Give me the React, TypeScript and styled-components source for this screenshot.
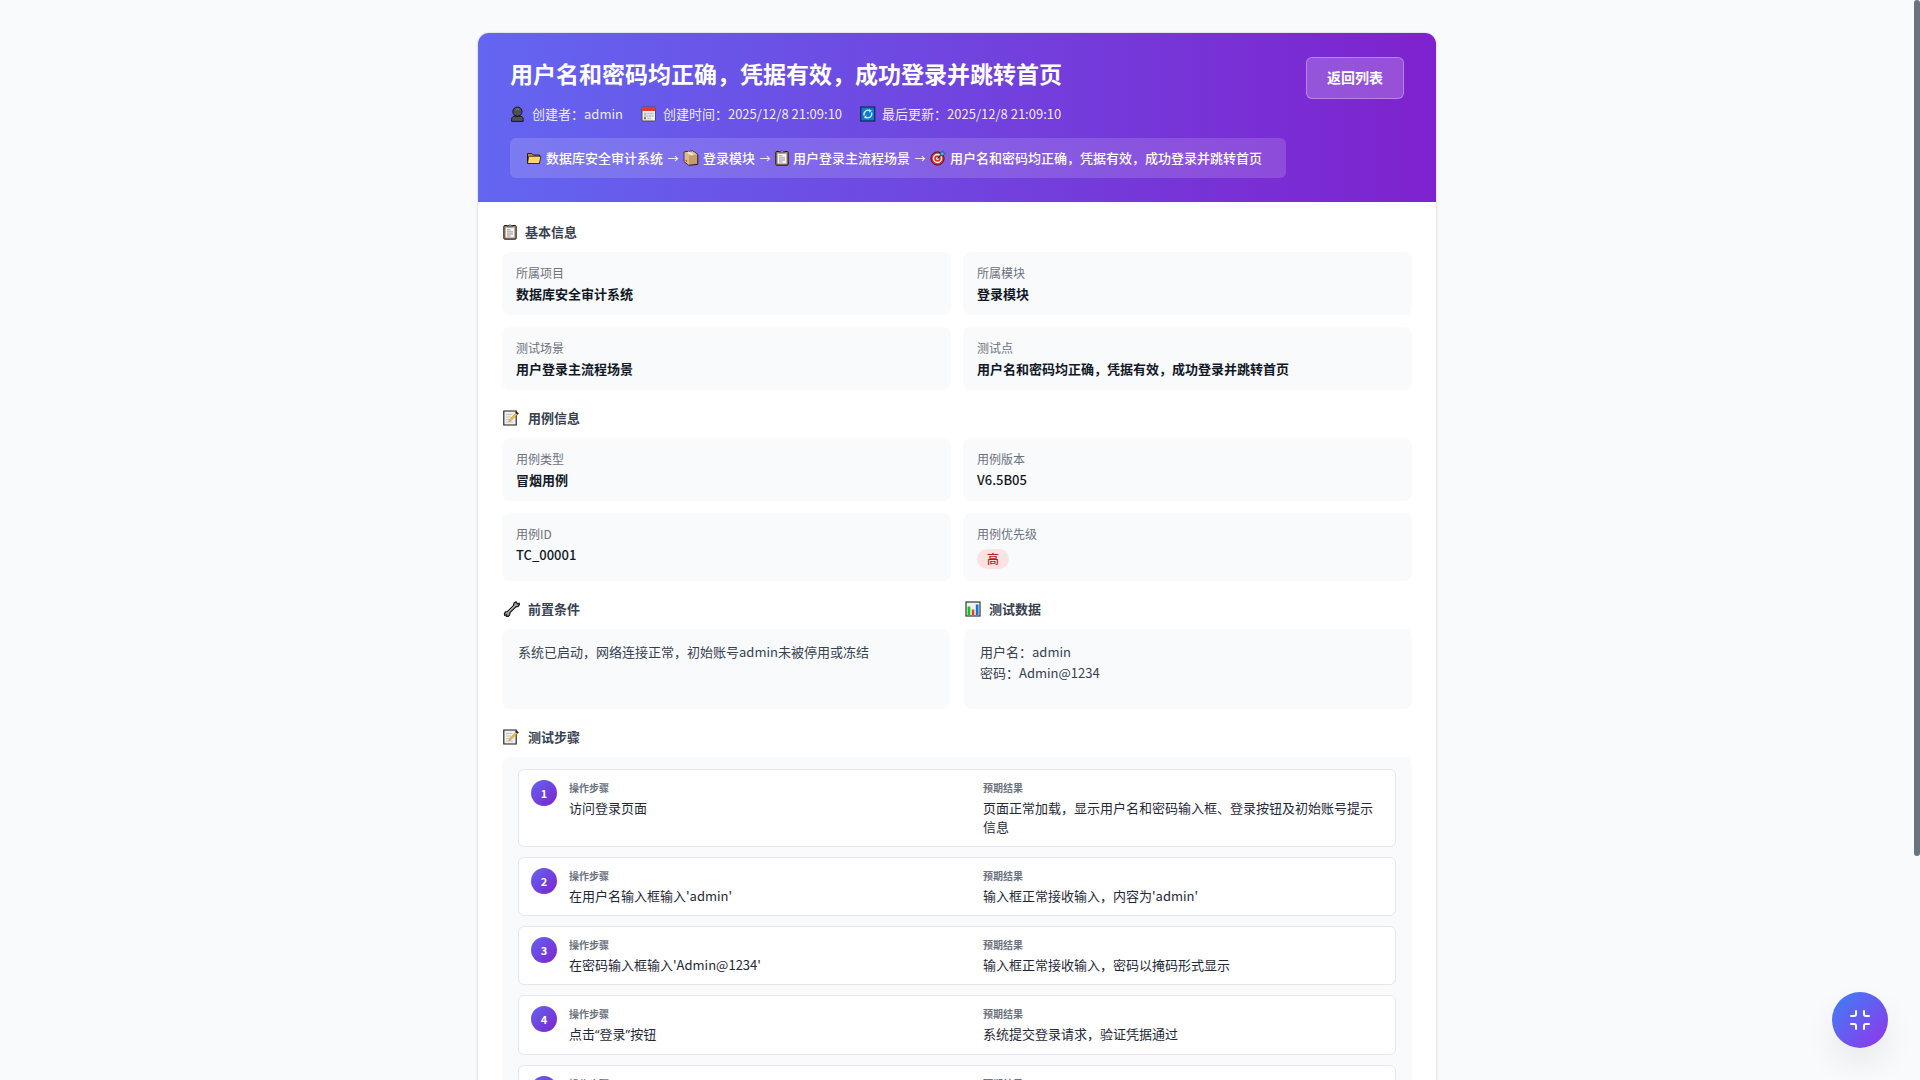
import React from 'react';
import styled, { createGlobalStyle } from 'styled-components';
import { Minimize } from 'lucide-react';

const GlobalStyle = createGlobalStyle`
  *, *::before, *::after { box-sizing: border-box; }
  html, body { margin: 0; padding: 0; }
  body {
    background: #f8fafc;
    color: #111827;
    font-family: "Noto Sans CJK SC", "Noto Sans", sans-serif;
    font-size: 13px;
    line-height: 20px;
  }
  h1, h2, p, dl, dt, dd, ol { margin: 0; padding: 0; }
`;

const Page = styled.div`
  height: 100vh;
  margin-right: 6px;
  overflow-y: auto;
  scrollbar-width: none;
  padding: 32px 24px 140px;
  background: #f8fafc;
`;

const ScrollThumb = styled.div`
  position: fixed;
  top: 0;
  right: 0;
  width: 6px;
  height: 856px;
  border-radius: 3px;
  background: #6b7280;
`;

const Card = styled.main`
  max-width: 960px;
  margin: 0 auto;
  background: #ffffff;
  border: 1px solid #e5e7eb;
  border-radius: 12px;
  overflow: hidden;
  box-shadow: 0 1px 3px rgba(0, 0, 0, 0.06);
`;

const Header = styled.header`
  display: flex;
  align-items: flex-start;
  gap: 20px;
  padding: 24px 32px;
  color: #ffffff;
  background: linear-gradient(90deg, #6366f1 0%, #7e22ce 100%);
`;

const HeaderMain = styled.div`
  flex: 1;
  min-width: 0;
  display: flex;
  flex-direction: column;
  gap: 14px;
`;

const Title = styled.h1`
  font-size: 23px;
  line-height: 32px;
  font-weight: 700;
`;

const MetaRow = styled.div`
  display: flex;
  flex-wrap: wrap;
  gap: 18px;
  line-height: 21px;
  color: rgba(255, 255, 255, 0.9);
`;

const MetaItem = styled.span`
  display: flex;
  align-items: center;
  gap: 6px;
`;

const Breadcrumb = styled.nav`
  display: flex;
  flex-wrap: wrap;
  align-items: center;
  gap: 4px;
  padding: 10px 16px;
  border-radius: 6px;
  background: rgba(255, 255, 255, 0.15);
  font-weight: 500;
`;

const Arrow = styled.span`
  width: 12px;
  display: flex;
  justify-content: center;
  font-size: 11px;
  font-weight: 400;
`;

const BackButton = styled.button`
  padding: 9px 20px 11px;
  border: 1px solid rgba(255, 255, 255, 0.3);
  border-radius: 6px;
  background: rgba(255, 255, 255, 0.2);
  color: #ffffff;
  font: inherit;
  font-size: 14px;
  line-height: 20px;
  font-weight: 600;
  cursor: pointer;
`;

const Body = styled.div`
  display: flex;
  flex-direction: column;
  gap: 18px;
  padding: 20px 24px;
`;

const Section = styled.section`
  display: flex;
  flex-direction: column;
  gap: 10px;
`;

const SectionTitle = styled.h2`
  display: flex;
  align-items: center;
  gap: 8px;
  padding-left: 1px;
  font-size: 13px;
  line-height: 20px;
  font-weight: 600;
  color: #374151;
`;

const Columns = styled.div<{ $gap: number }>`
  display: grid;
  grid-template-columns: 1fr 1fr;
  gap: ${(p) => p.$gap}px;
`;

const InfoGrid = styled(Columns).attrs({ as: 'dl' })``;

const InfoCard = styled.div`
  padding: 12px 14px;
  border-radius: 8px;
  background: #f9fafb;
`;

const InfoLabel = styled.dt`
  margin-bottom: 2px;
  font-size: 12px;
  line-height: 18px;
  color: #6b7280;
`;

const InfoValue = styled.dd<{ $code?: boolean }>`
  line-height: 19px;
  font-weight: ${(p) => (p.$code ? 500 : 600)};
  color: #111827;
`;

const BadgeValue = styled.dd`
  display: flex;
  align-items: flex-end;
  height: 24px;
`;

const Badge = styled.span`
  padding: 0 10px;
  border-radius: 10px;
  background: #fee2e2;
  color: #b91c1c;
  font-size: 12px;
  line-height: 20px;
  font-weight: 500;
`;

const TextBox = styled.p`
  min-height: 80px;
  padding: 12px 16px;
  border-radius: 8px;
  background: #f9fafb;
  line-height: 21px;
  color: #374151;
  white-space: pre-line;
`;

const StepList = styled.ol`
  display: flex;
  flex-direction: column;
  gap: 10px;
  padding: 12px 16px;
  border-radius: 8px;
  background: #f9fafb;
  list-style: none;
`;

const StepItem = styled.li`
  display: flex;
  align-items: flex-start;
  gap: 12px;
  padding: 10px 12px;
  border: 1px solid #e5e7eb;
  border-radius: 6px;
  background: #ffffff;
`;

const StepNumber = styled.span`
  flex: none;
  width: 26px;
  border-radius: 50%;
  background: linear-gradient(135deg, #6366f1 0%, #7e22ce 100%);
  color: #ffffff;
  font-size: 11px;
  line-height: 26px;
  font-weight: 600;
  text-align: center;
`;

const StepColumns = styled(Columns)`
  flex: 1;
`;

const StepLabel = styled.p`
  margin-bottom: 3px;
  font-size: 10px;
  line-height: 15px;
  font-weight: 600;
  color: #6b7280;
`;

const StepText = styled.p`
  line-height: 19px;
  color: #1f2937;
`;

const LatinMark = styled.span`
  font-family: "Open Sans", "Noto Sans", sans-serif;
`;

const FloatingButton = styled.button`
  position: fixed;
  right: 32px;
  bottom: 32px;
  display: flex;
  align-items: center;
  justify-content: center;
  width: 56px;
  height: 56px;
  padding: 0;
  border: 0;
  border-radius: 50%;
  background: linear-gradient(135deg, #3b82f6 0%, #9333ea 100%);
  color: #ffffff;
  box-shadow: 0 16px 32px rgba(0, 0, 0, 0.07);
  cursor: pointer;
`;

const Glyph = styled.svg`
  flex: none;
  display: block;
`;

const PersonIcon = () => (
  <Glyph width="16" height="16" viewBox="0 0 16 16" aria-hidden="true">
    <path d="M1.600 15.400v-2.200c0-2 1.600-3 3.400-3.200h4.600c1.900.2 3.600 1.200 3.600 3.200v2.200z" fill="#4d5157" stroke="#17181b" />
    <circle cx="7.400" cy="5.600" r="4.600" fill="#4d5157" stroke="#17181b" />
    <path d="M4.500 9.500q2.900 2.500 5.800 0" fill="none" stroke="#17181b" />
    <path d="M6 3.500q1.500-1 3 0" fill="none" stroke="#7c8087" />
  </Glyph>
);

const CalendarIcon = () => (
  <Glyph width="16" height="16" viewBox="0 0 16 16" aria-hidden="true">
    <rect x="1" y="1" width="13.500" height="14" rx="1" fill="#eceff1" stroke="#4b4d52" />
    <path d="M1 1h13.500v4H1z" fill="#e23b2e" />
    <path d="M6.500 7.500h6M3 10h9.500M6.500 12.500h3.500" stroke="#b4b9be" strokeWidth="1.500" strokeDasharray="2 .5" />
    <path d="M3 6.700h2.500v2H3z" fill="#b0b4ba" />
    <path d="M3 11.300h2v2H3z" fill="#e23b2e" />
  </Glyph>
);

const RefreshIcon = () => (
  <Glyph width="16" height="16" viewBox="0 0 16 16" aria-hidden="true">
    <rect x=".8" y="1" width="14" height="14" fill="#0f78d4" stroke="#0c1c36" />
    <path d="M4.200 9.500A4 4 0 0 1 10 4.800M11.500 6.500A4 4 0 0 1 5.600 11.200" fill="none" stroke="#d5f1fb" strokeWidth="1.300" />
    <path d="M9 3.300l2.800 1.500-2.400 2zM6.500 12.800l-2.700-1.600 2.400-2z" fill="#d5f1fb" />
  </Glyph>
);

const FolderIcon = () => (
  <Glyph width="16" height="16" viewBox="0 0 16 16" aria-hidden="true">
    <path d="M1.500 13.500V3.600h4.500l1.500 1.500h6v8.400z" fill="#d99a29" stroke="#21180a" strokeLinejoin="round" />
    <path d="M1.500 13.500L2.700 6.200h12.200l-1.500 7.300z" fill="#ffd76e" stroke="#21180a" strokeWidth=".8" strokeLinejoin="round" />
  </Glyph>
);

const PackageIcon = () => (
  <Glyph width="16" height="16" viewBox="0 0 16 16" aria-hidden="true">
    <path d="M1.200 2L9.800 1l5 3.500v9.800L6 15.300l-4.800-3.600z" fill="#c69c6d" stroke="#241a12" strokeLinejoin="round" />
    <path d="M1.500 2.300L6 5.500v9.500l-4.500-3.400z" fill="#dfb98a" />
    <path d="M1.500 2.300L9.800 1.300l4.700 3.200L6 5.600z" fill="#e4c496" />
    <path d="M5 2l4.700 3" stroke="#f7ead3" strokeWidth="1.600" />
    <path d="M2.500 9.500l1.500 1v1.500l-1.500-1z" fill="#e0392c" />
  </Glyph>
);

const ClipboardIcon = () => (
  <Glyph width="14" height="16" viewBox="0 0 14 16" aria-hidden="true">
    <rect x=".8" y="1.500" width="12.400" height="13.700" rx="1" fill="#a98768" stroke="#1d1712" />
    <path d="M2.600 3.400h8.800v10H2.600z" fill="#f4f4f4" />
    <path d="M4.300 2.800V1.500h1.400q1.300-1.600 2.600 0h1.400v1.300z" fill="#c4c7ca" stroke="#3c3c3e" strokeWidth=".8" />
    <path d="M4 5.800h3.500M4 7.900h6M4 10h6M4 12h3.500" stroke="#85888c" strokeWidth=".9" />
  </Glyph>
);

const TargetIcon = () => (
  <Glyph width="16" height="16" viewBox="0 0 16 16" aria-hidden="true">
    <circle cx="7.500" cy="8.500" r="6.600" fill="#df3427" stroke="#2a0d0b" strokeWidth=".8" />
    <circle cx="7.500" cy="8.500" r="4.700" fill="#ffffff" />
    <circle cx="7.500" cy="8.500" r="3.300" fill="#df3427" />
    <circle cx="7.500" cy="8.500" r="1.500" fill="#ffffff" />
    <path d="M7.500 8.500l4-4" stroke="#17354b" strokeWidth="1.200" />
    <path d="M10.300 5.600V3.200l2.400-2.400.5 2 2 .5-2.400 2.400z" fill="#35b6ea" stroke="#123b59" strokeWidth=".6" />
  </Glyph>
);

const MemoIcon = () => (
  <Glyph width="17" height="16" viewBox="0 0 17 16" aria-hidden="true">
    <path d="M.8 1h12.400v14H.8z" fill="#eeeeee" stroke="#17181a" strokeWidth="1.100" />
    <path d="M3 4.500h6M3 7h5M3 9.500h3.500M3 12h7" stroke="#c3c6c9" />
    <path d="M5.700 11.800l1-2.400L13 3l1.400 1.300-6.400 6.500z" fill="#f6bd3c" stroke="#b98824" strokeWidth=".5" />
    <path d="M12.300 2.500l1.300-1 2.200 1.900-1.300 1.400z" fill="#1d1d20" />
  </Glyph>
);

const WrenchIcon = () => (
  <Glyph width="17" height="16" viewBox="0 0 16 16" aria-hidden="true">
    <path
      d="M12.700.8l-2.200 1.300-.6 2.500-5.800 5.900-2.300.4L.9 12.800l.3 1.700 1.500-.8.8 1-.6.9 1.900-.2 1.400-1.500.3-2.200 5.800-5.900 2.300-.4 1.300-1.700-.2-1.500-1.400.8-.9-.9z"
      fill="#9b9fa3"
      stroke="#121315"
      strokeWidth="1.200"
      strokeLinejoin="round"
    />
    <path d="M4.800 11.200l6.400-6.500" stroke="#c9cbce" />
  </Glyph>
);

const ChartIcon = () => (
  <Glyph width="16" height="16" viewBox="0 0 16 16" aria-hidden="true">
    <rect x="1" y="1" width="14" height="14" fill="#f0f1f2" stroke="#323438" strokeWidth="1.200" />
    <path d="M2.600 5.500h2.700V14H2.600z" fill="#16c60c" />
    <path d="M6.800 8.500h2.500V14H6.800z" fill="#e8412b" />
    <path d="M10.800 3.500h2.700V14h-2.700z" fill="#1177d4" />
  </Glyph>
);

type Field = { label: string; value: string; badge?: boolean; code?: boolean };

const basicFields: Field[] = [
  { label: '所属项目', value: '数据库安全审计系统' },
  { label: '所属模块', value: '登录模块' },
  { label: '测试场景', value: '用户登录主流程场景' },
  { label: '测试点', value: '用户名和密码均正确，凭据有效，成功登录并跳转首页' },
];

const caseFields: Field[] = [
  { label: '用例类型', value: '冒烟用例' },
  { label: '用例版本', value: 'V6.5B05', code: true },
  { label: '用例ID', value: 'TC_00001', code: true },
  { label: '用例优先级', value: '高', badge: true },
];

const steps: { action: React.ReactNode; expected: string }[] = [
  { action: '访问登录页面', expected: '页面正常加载，显示用户名和密码输入框、登录按钮及初始账号提示信息' },
  { action: "在用户名输入框输入'admin'", expected: "输入框正常接收输入，内容为'admin'" },
  { action: "在密码输入框输入'Admin@1234'", expected: '输入框正常接收输入，密码以掩码形式显示' },
  {
    action: (
      <>
        点击<LatinMark>“</LatinMark>登录<LatinMark>”</LatinMark>按钮
      </>
    ),
    expected: '系统提交登录请求，验证凭据通过',
  },
  { action: '', expected: '' },
];

const Fields = ({ items }: { items: Field[] }) => (
  <InfoGrid $gap={12}>
    {items.map((f) => (
      <InfoCard key={f.label}>
        <InfoLabel>{f.label}</InfoLabel>
        {f.badge ? (
          <BadgeValue>
            <Badge>{f.value}</Badge>
          </BadgeValue>
        ) : (
          <InfoValue $code={f.code}>{f.value}</InfoValue>
        )}
      </InfoCard>
    ))}
  </InfoGrid>
);

export default function App() {
  return (
    <>
      <GlobalStyle />
      <Page>
        <Card>
          <Header>
            <HeaderMain>
              <Title>用户名和密码均正确，凭据有效，成功登录并跳转首页</Title>
              <MetaRow>
                <MetaItem><PersonIcon /><span>创建者：admin</span></MetaItem>
                <MetaItem><CalendarIcon /><span>创建时间：2025/12/8 21:09:10</span></MetaItem>
                <MetaItem><RefreshIcon /><span>最后更新：2025/12/8 21:09:10</span></MetaItem>
              </MetaRow>
              <Breadcrumb>
                <FolderIcon /><span>数据库安全审计系统</span>
                <Arrow>→</Arrow>
                <PackageIcon /><span>登录模块</span>
                <Arrow>→</Arrow>
                <ClipboardIcon /><span>用户登录主流程场景</span>
                <Arrow>→</Arrow>
                <TargetIcon /><span>用户名和密码均正确，凭据有效，成功登录并跳转首页</span>
              </Breadcrumb>
            </HeaderMain>
            <BackButton type="button">返回列表</BackButton>
          </Header>
          <Body>
            <Section>
              <SectionTitle><ClipboardIcon />基本信息</SectionTitle>
              <Fields items={basicFields} />
            </Section>
            <Section>
              <SectionTitle><MemoIcon />用例信息</SectionTitle>
              <Fields items={caseFields} />
            </Section>
            <Columns $gap={14}>
              <Section>
                <SectionTitle><WrenchIcon />前置条件</SectionTitle>
                <TextBox>系统已启动，网络连接正常，初始账号admin未被停用或冻结</TextBox>
              </Section>
              <Section>
                <SectionTitle><ChartIcon />测试数据</SectionTitle>
                <TextBox>{'用户名：admin\n密码：Admin@1234'}</TextBox>
              </Section>
            </Columns>
            <Section>
              <SectionTitle><MemoIcon />测试步骤</SectionTitle>
              <StepList>
                {steps.map((s, i) => (
                  <StepItem key={i}>
                    <StepNumber>{i + 1}</StepNumber>
                    <StepColumns $gap={14}>
                      <div>
                        <StepLabel>操作步骤</StepLabel>
                        <StepText>{s.action}</StepText>
                      </div>
                      <div>
                        <StepLabel>预期结果</StepLabel>
                        <StepText>{s.expected}</StepText>
                      </div>
                    </StepColumns>
                  </StepItem>
                ))}
              </StepList>
            </Section>
          </Body>
        </Card>
      </Page>
      <ScrollThumb />
      <FloatingButton type="button" aria-label="退出全屏">
        <Minimize size={24} />
      </FloatingButton>
    </>
  );
}
